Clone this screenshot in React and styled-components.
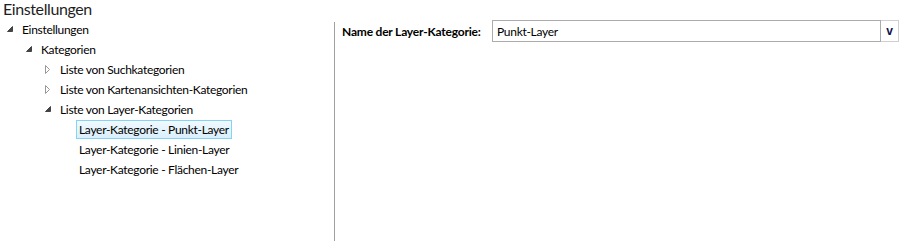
import React, { useState } from "react";
import styled, { createGlobalStyle } from "styled-components";

const GlobalStyle = createGlobalStyle`
  html, body {
    margin: 0;
    padding: 0;
    background: #ffffff;
  }
  body {
    font-family: Lato, "Noto Sans", sans-serif;
    font-size: 12px;
    color: #000000;
  }
`;

const tree = [
  {
    id: "root",
    label: "Einstellungen",
    children: [
      {
        id: "kat",
        label: "Kategorien",
        children: [
          { id: "such", label: "Liste von Suchkategorien", children: [], collapsed: true },
          {
            id: "karten",
            label: "Liste von Kartenansichten-Kategorien",
            children: [],
            collapsed: true,
          },
          {
            id: "layer",
            label: "Liste von Layer-Kategorien",
            children: [
              { id: "punkt", label: "Layer-Kategorie - Punkt-Layer" },
              { id: "linien", label: "Layer-Kategorie - Linien-Layer" },
              { id: "flaechen", label: "Layer-Kategorie - Flächen-Layer" },
            ],
          },
        ],
      },
    ],
  },
];

const flatten = (nodes, level = 0) =>
  nodes.reduce((rows, node) => {
    rows.push({ ...node, level });
    if (node.children && !node.collapsed) {
      rows.push(...flatten(node.children, level + 1));
    }
    return rows;
  }, []);

const ExpandedArrow = () => (
  <svg width="6" height="6" viewBox="0 0 6 6">
    <path d="M5.5,0.5 L5.5,5.5 L0.5,5.5 Z" fill="#444444" stroke="#444444" strokeWidth="1" />
  </svg>
);

const CollapsedArrow = () => (
  <svg width="6" height="9" viewBox="0 0 6 9">
    <path d="M0.5,0.5 L0.5,8.5 L4.5,4.5 Z" fill="#ffffff" stroke="#989898" strokeWidth="1" />
  </svg>
);

const App = () => {
  const [selected, setSelected] = useState("punkt");
  const rows = flatten(tree);
  return (
    <>
      <GlobalStyle />
      <Page>
        <Title>Einstellungen</Title>
        <Main>
          <TreePane>
            {rows.map((row) => {
              const hasChildren = row.children && (row.children.length > 0 || row.collapsed);
              return (
                <TreeRow key={row.id} level={row.level}>
                  <Expander>
                    {hasChildren && (row.collapsed ? <CollapsedArrow /> : <ExpandedArrow />)}
                  </Expander>
                  <ItemLabel
                    selected={selected === row.id}
                    onClick={() => setSelected(row.id)}
                  >
                    {row.label}
                  </ItemLabel>
                </TreeRow>
              );
            })}
          </TreePane>
          <Divider />
          <DetailPane>
            <FieldRow>
              <FieldLabel>Name der Layer-Kategorie:</FieldLabel>
              <Combo>
                <ComboInput defaultValue="Punkt-Layer" />
                <ComboButton>v</ComboButton>
              </Combo>
            </FieldRow>
          </DetailPane>
        </Main>
      </Page>
    </>
  );
};

export default App;

// Styles //
const Page = styled.div`
  width: 903px;
  height: 241px;
  display: flex;
  flex-direction: column;
  overflow: hidden;
`;

const Title = styled.div`
  height: 19px;
  line-height: 17px;
  padding-left: 3px;
  font-size: 16px;
  letter-spacing: -0.4px;
  color: #1e1e1e;
`;

const Main = styled.div`
  flex: 1;
  display: flex;
`;

const TreePane = styled.div`
  width: 334px;
  display: flex;
  flex-direction: column;
`;

const TreeRow = styled.div`
  display: flex;
  align-items: center;
  height: 20px;
  padding-left: ${(p) => 3 + p.level * 19}px;
`;

const Expander = styled.div`
  width: 19px;
  display: flex;
  align-items: center;
  padding-left: 4px;
  box-sizing: border-box;
`;

const ItemLabel = styled.div`
  margin-left: -3px;
  padding: 0 2px;
  height: 17px;
  line-height: 17px;
  white-space: nowrap;
  letter-spacing: -0.3px;
  border: 1px solid ${(p) => (p.selected ? "#84d3f7" : "transparent")};
  background: ${(p) =>
    p.selected ? "linear-gradient(to bottom, #f1f9fe, #d9effb)" : "transparent"};
  cursor: default;
`;

const Divider = styled.div`
  width: 1px;
  margin-top: 3px;
  background: #a0a0a0;
`;

const DetailPane = styled.div`
  flex: 1;
  padding: 1px 4px 0 7px;
`;

const FieldRow = styled.div`
  display: flex;
  align-items: center;
  height: 22px;
`;

const FieldLabel = styled.div`
  flex: 0 0 150px;
  font-weight: bold;
  letter-spacing: -0.2px;
  white-space: nowrap;
`;

const Combo = styled.div`
  display: flex;
  width: 407px;
  height: 22px;
`;

const ComboInput = styled.input`
  flex: 1;
  min-width: 0;
  box-sizing: border-box;
  height: 22px;
  margin: 0;
  padding: 0 4px;
  border: 1px solid #acacac;
  font: inherit;
  letter-spacing: -0.3px;
  color: #000000;
  outline: none;
`;

const ComboButton = styled.button`
  width: 18px;
  height: 22px;
  box-sizing: border-box;
  margin: 0;
  padding: 0;
  border: 1px solid #d0d0d0;
  border-left: none;
  background: #ffffff;
  font-family: "Liberation Sans", Arial, sans-serif;
  font-weight: bold;
  font-size: 12px;
  color: #10104a;
`;
